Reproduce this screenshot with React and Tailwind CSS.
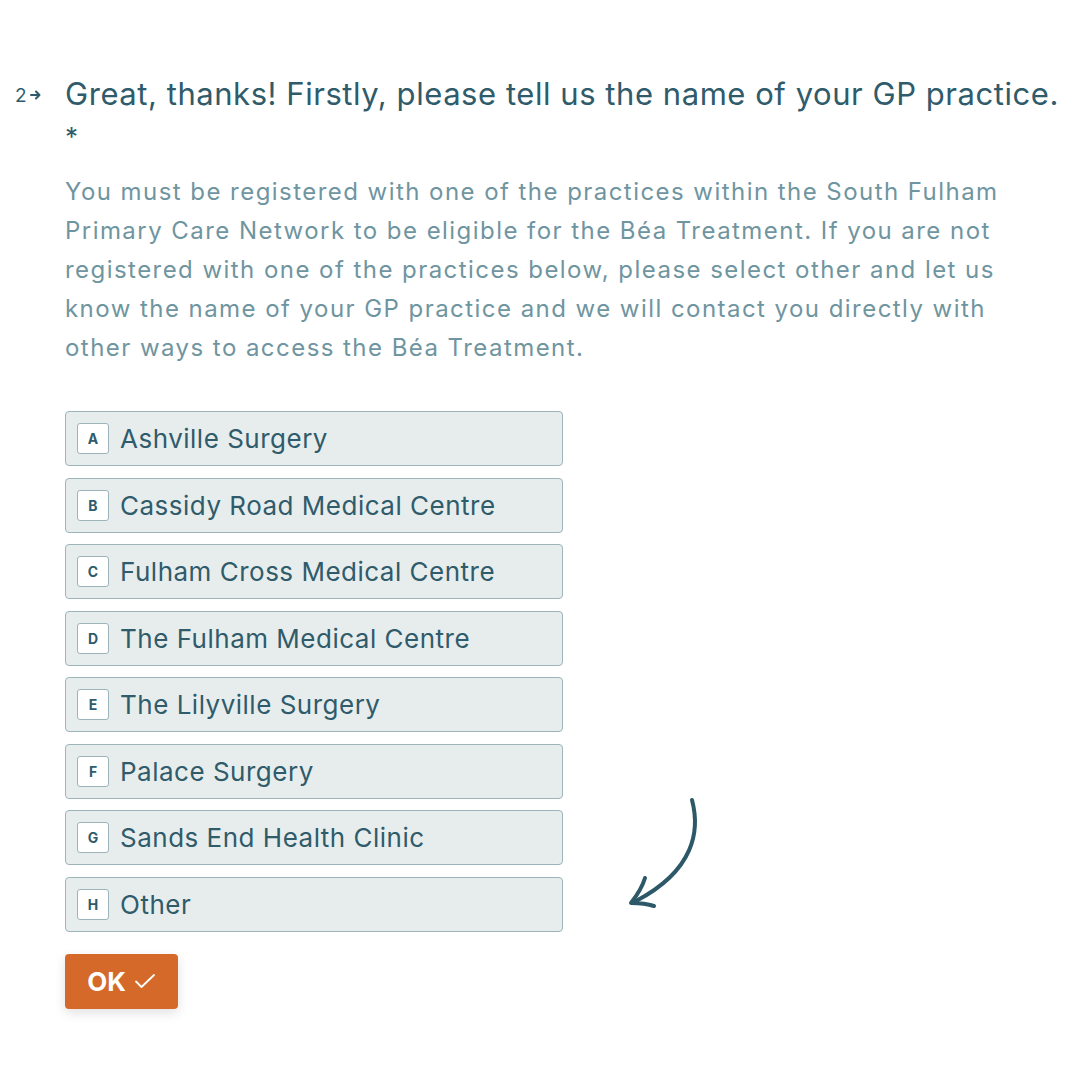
import React, { useState } from "react";

const options = [
  { key: "A", label: "Ashville Surgery" },
  { key: "B", label: "Cassidy Road Medical Centre" },
  { key: "C", label: "Fulham Cross Medical Centre" },
  { key: "D", label: "The Fulham Medical Centre" },
  { key: "E", label: "The Lilyville Surgery" },
  { key: "F", label: "Palace Surgery" },
  { key: "G", label: "Sands End Health Clinic" },
  { key: "H", label: "Other" },
];

const App = () => {
  const [selected, setSelected] = useState(null);

  return (
    <div
      className="w-[1080px] h-[1080px] bg-white relative text-[#2f5b6b]"
      style={{ fontFamily: "Inter, 'Noto Sans', sans-serif" }}
    >
      <div className="pt-[74px] pl-[15px] flex">
        <div className="w-[50px] flex items-start pt-[12px] text-[19px] leading-none gap-[3px]">
          <span>2</span>
          <svg width="12" height="12" viewBox="0 0 12 12" className="mt-[3px]">
            <path d="M1 6h8M6 2.5L9.5 6 6 9.5" stroke="#2f5b6b" strokeWidth="2" fill="none" strokeLinecap="round" strokeLinejoin="round" />
          </svg>
        </div>
        <div className="flex-1">
          <h1 className="text-[31px] leading-[40px] tracking-[0.55px] whitespace-nowrap">
            Great, thanks! Firstly, please tell us the name of your GP practice.
          </h1>
          <div className="text-[26px] leading-[34px] mt-[6px]">*</div>
          <p className="mt-[18px] text-[24px] leading-[39px] tracking-[1.45px] text-[#6f95a0] w-[960px]">
            You must be registered with one of the practices within the South Fulham Primary Care Network to be eligible for the Béa Treatment. If you are not registered with one of the practices below, please select other and let us know the name of your GP practice and we will contact you directly with other ways to access the Béa Treatment.
          </p>

          <div className="mt-[44px] flex flex-col gap-[11.5px] w-[498px]">
            {options.map((o) => (
              <button
                key={o.key}
                onClick={() => setSelected(o.key)}
                className={`h-[55px] flex items-center gap-[11px] px-[11px] rounded-[4px] border-[1.5px] text-left ${
                  selected === o.key ? "border-[#2f5b6b] bg-[#d5e0e3]" : "border-[#9db4bb] bg-[#e7eded]"
                }`}
              >
                <span className="w-[32px] h-[31px] flex items-center justify-center bg-white border border-[#9db4bb] rounded-[3px] text-[14px] font-bold">
                  {o.key}
                </span>
                <span className="text-[26px] tracking-[0.5px]">{o.label}</span>
              </button>
            ))}
          </div>

          <button className="mt-[22px] w-[113px] h-[55px] rounded-[4px] bg-[#d5692a] text-white flex items-center justify-center gap-[8px] shadow-[0_4px_12px_rgba(0,0,0,0.12)]">
            <span className="text-[26px] font-bold">OK</span>
            <svg width="22" height="18" viewBox="0 0 22 18">
              <path d="M2 9.5l5.5 5.5L20 3" stroke="white" strokeWidth="1.8" fill="none" strokeLinecap="round" strokeLinejoin="round" />
            </svg>
          </button>
        </div>
      </div>

      <svg className="absolute left-[620px] top-[790px]" width="90" height="125" viewBox="0 0 90 125">
        <path d="M72 10 C 80 40, 75 80, 16 111" stroke="#2c5868" strokeWidth="4" fill="none" strokeLinecap="round" />
        <path d="M25 88 C 22 98, 18 104, 11 113 C 20 113, 28 114, 34 116" stroke="#2c5868" strokeWidth="4" fill="none" strokeLinecap="round" strokeLinejoin="round" />
      </svg>
    </div>
  );
};

export default App;
